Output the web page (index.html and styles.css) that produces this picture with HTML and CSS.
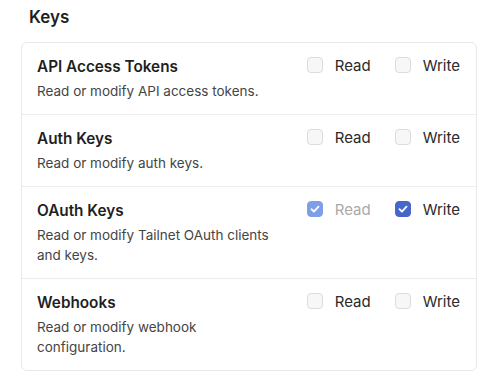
FILE: index.html
```html
<!DOCTYPE html>
<html lang="en">
<head>
    <meta charset="UTF-8">
    <meta name="viewport" content="width=device-width, initial-scale=1.0">
    <title>Keys</title>
    <link rel="stylesheet" href="styles.css">
</head>
<body>
    <h2 class="section-title">Keys</h2>

    <div class="scope-card">
        <div class="scope-row">
            <div class="scope-info">
                <div class="scope-name">API Access Tokens</div>
                <div class="scope-desc">Read or modify API access tokens.</div>
            </div>
            <div class="scope-perms">
                <label class="perm"><span class="box"></span>Read</label>
                <label class="perm"><span class="box"></span>Write</label>
            </div>
        </div>

        <div class="scope-row">
            <div class="scope-info">
                <div class="scope-name">Auth Keys</div>
                <div class="scope-desc">Read or modify auth keys.</div>
            </div>
            <div class="scope-perms">
                <label class="perm"><span class="box"></span>Read</label>
                <label class="perm"><span class="box"></span>Write</label>
            </div>
        </div>

        <div class="scope-row">
            <div class="scope-info">
                <div class="scope-name">OAuth Keys</div>
                <div class="scope-desc">Read or modify Tailnet OAuth clients and keys.</div>
            </div>
            <div class="scope-perms">
                <label class="perm disabled">
                    <span class="box checked">
                        <svg viewBox="0 0 16 16" width="16" height="16"><path d="M4.5 8.2l2.4 2.4 4.6-5" fill="none" stroke="#fff" stroke-width="1.8" stroke-linecap="round" stroke-linejoin="round"/></svg>
                    </span>Read
                </label>
                <label class="perm">
                    <span class="box checked">
                        <svg viewBox="0 0 16 16" width="16" height="16"><path d="M4.5 8.2l2.4 2.4 4.6-5" fill="none" stroke="#fff" stroke-width="1.8" stroke-linecap="round" stroke-linejoin="round"/></svg>
                    </span>Write
                </label>
            </div>
        </div>

        <div class="scope-row">
            <div class="scope-info">
                <div class="scope-name">Webhooks</div>
                <div class="scope-desc">Read or modify webhook configuration.</div>
            </div>
            <div class="scope-perms">
                <label class="perm"><span class="box"></span>Read</label>
                <label class="perm"><span class="box"></span>Write</label>
            </div>
        </div>
    </div>
</body>
</html>
```

FILE: styles.css
```css
body {
    font-family: Inter, "Noto Sans", sans-serif;
    color: #1f1f1f;
    background-color: #fff;
    margin: 0;
    padding: 0 23px 0 21px;
}

.section-title {
    font-size: 17px;
    font-weight: 600;
    line-height: 22px;
    margin: 6px 0 14px 8px;
}

/* Card with the scope rows */
.scope-card {
    border: 1px solid #e9e9e9;
    border-radius: 6px;
}

.scope-row {
    display: flex;
    justify-content: space-between;
    padding: 13px 16px 13px 15px;
    border-top: 1px solid #ececec;
}

.scope-row:first-child {
    border-top: none;
}

.scope-info {
    width: 250px;
}

.scope-name {
    font-size: 15.3px;
    font-weight: 600;
    line-height: 22px;
    margin-bottom: 3px;
}

.scope-desc {
    font-size: 13.5px;
    line-height: 20px;
    color: #454545;
}

.scope-perms {
    display: flex;
    gap: 24px;
    height: 16px;
    margin-top: 1px;
    align-items: center;
}

.perm {
    display: flex;
    align-items: center;
    gap: 12px;
    font-size: 15px;
    color: #2a2a2a;
}

.perm.disabled {
    color: #a9a9a9;
}

.box {
    width: 14px;
    height: 14px;
    border: 1px solid #dcdcdc;
    border-radius: 4px;
    background-color: #f7f7f7;
    display: flex;
    align-items: center;
    justify-content: center;
}

.box.checked {
    border-color: #4667c9;
    background-color: #4667c9;
}

.box svg {
    flex: none;
}

.perm.disabled .box.checked {
    border-color: #7e9ee8;
    background-color: #7e9ee8;
}
```
